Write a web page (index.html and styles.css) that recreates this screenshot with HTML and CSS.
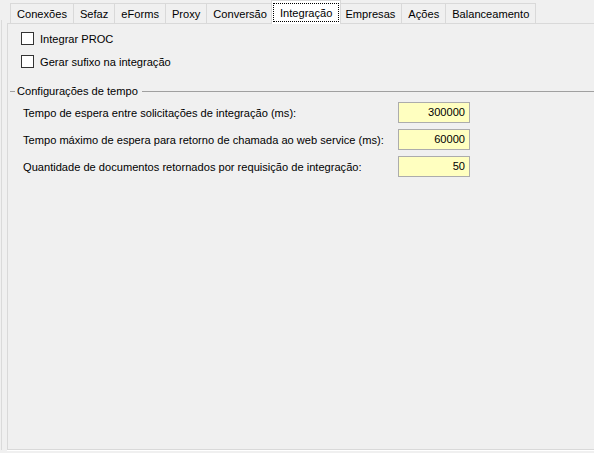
FILE: index.html
```html
<!DOCTYPE html>
<html lang="pt-BR">
<head>
<meta charset="utf-8">
<title>Integração</title>
<link rel="stylesheet" href="styles.css">
</head>
<body>
<div class="frame">
  <div class="edge"></div>
  <div class="tabctl">
    <div class="tabstrip">
      <div class="tab">Conexões</div>
      <div class="tab">Sefaz</div>
      <div class="tab">eForms</div>
      <div class="tab">Proxy</div>
      <div class="tab">Conversão</div>
      <div class="tab tab-active"><span class="focus">Integração</span></div>
      <div class="tab">Empresas</div>
      <div class="tab">Ações</div>
      <div class="tab">Balanceamento</div>
    </div>
    <div class="panel">
      <div class="checks">
        <label class="check"><span class="box"></span><span>Integrar PROC</span></label>
        <label class="check"><span class="box"></span><span>Gerar sufixo na integração</span></label>
      </div>
      <div class="group">
        <div class="group-head"><span class="dash"></span><span class="group-title">Configurações de tempo</span><span class="rule"></span></div>
        <div class="fields">
          <span class="field-label">Tempo de espera entre solicitações de integração (ms):</span>
          <span class="input">300000</span>
          <span class="field-label">Tempo máximo de espera para retorno de chamada ao web service (ms):</span>
          <span class="input">60000</span>
          <span class="field-label">Quantidade de documentos retornados por requisição de integração:</span>
          <span class="input">50</span>
        </div>
      </div>
    </div>
    <div class="under"></div>
  </div>
</div>
</body>
</html>
```
FILE: styles.css
```css
html, body {
  margin: 0;
  padding: 0;
  background: #f0f0f0;
  width: 594px;
  height: 453px;
  overflow: hidden;
}
body {
  font-family: "Liberation Sans", Arial, sans-serif;
  font-size: 11.1px;
  color: #000;
}
.frame {
  display: flex;
  height: 453px;
  padding-left: 1px;
}
.edge {
  width: 1px;
  background: #dadada;
  margin-top: 20px;
  height: 430px;
  flex: none;
}
.tabctl {
  flex: 1;
  margin-left: 5px;
  display: flex;
  flex-direction: column;
  min-width: 0;
}
.tabstrip {
  display: flex;
  align-items: flex-end;
  height: 23px;
  padding-left: 3px;
  position: relative;
  z-index: 1;
}
.tab {
  height: 20px;
  box-sizing: border-box;
  border: 1px solid #d9d9d9;
  border-bottom: none;
  margin-right: -1px;
  padding: 1px 6px 0;
  display: flex;
  align-items: center;
  justify-content: center;
  white-space: nowrap;
  background: #f0f0f0;
}
.tab-active {
  height: 24px;
  margin-bottom: -1px;
  margin-left: -2px;
  margin-right: -3px;
  background: #fff;
  padding: 2px 1px 2px 1px;
  position: relative;
  z-index: 2;
}
.focus {
  box-sizing: border-box;
  height: 100%;
  display: flex;
  align-items: center;
  padding: 0 6px;
  border: 1px dotted #000;
}
.panel {
  box-sizing: border-box;
  height: 427px;
  border-top: 1px solid #d9d9d9;
  border-left: 1px solid #d9d9d9;
  border-bottom: 1px solid #d9d9d9;
  padding-top: 8px;
}
.under {
  height: 1px;
  background: #fff;
}
.checks {
  padding-left: 13px;
  display: flex;
  flex-direction: column;
  gap: 10px;
}
.check {
  display: flex;
  align-items: center;
  gap: 6px;
  height: 13px;
}
.box {
  width: 13px;
  height: 13px;
  box-sizing: border-box;
  border: 1px solid #333;
  background: #fff;
  flex: none;
}
.group {
  margin-top: 16px;
  padding-left: 2px;
}
.group-head {
  display: flex;
  align-items: center;
  height: 14px;
}
.dash {
  width: 5px;
  height: 1px;
  background: #a0a0a0;
  flex: none;
}
.group-title {
  padding: 0 4px 0 2px;
  white-space: nowrap;
}
.rule {
  flex: 1;
  height: 1px;
  background: #a0a0a0;
}
.fields {
  display: grid;
  grid-template-columns: 375px 72px;
  row-gap: 6px;
  padding-left: 13px;
  margin-top: 4px;
  align-items: center;
}
.field-label {
  white-space: nowrap;
}
.input {
  box-sizing: border-box;
  height: 21px;
  border: 1px solid #acacac;
  background: #ffffc0;
  text-align: right;
  padding-right: 4px;
  line-height: 19px;
}
```
